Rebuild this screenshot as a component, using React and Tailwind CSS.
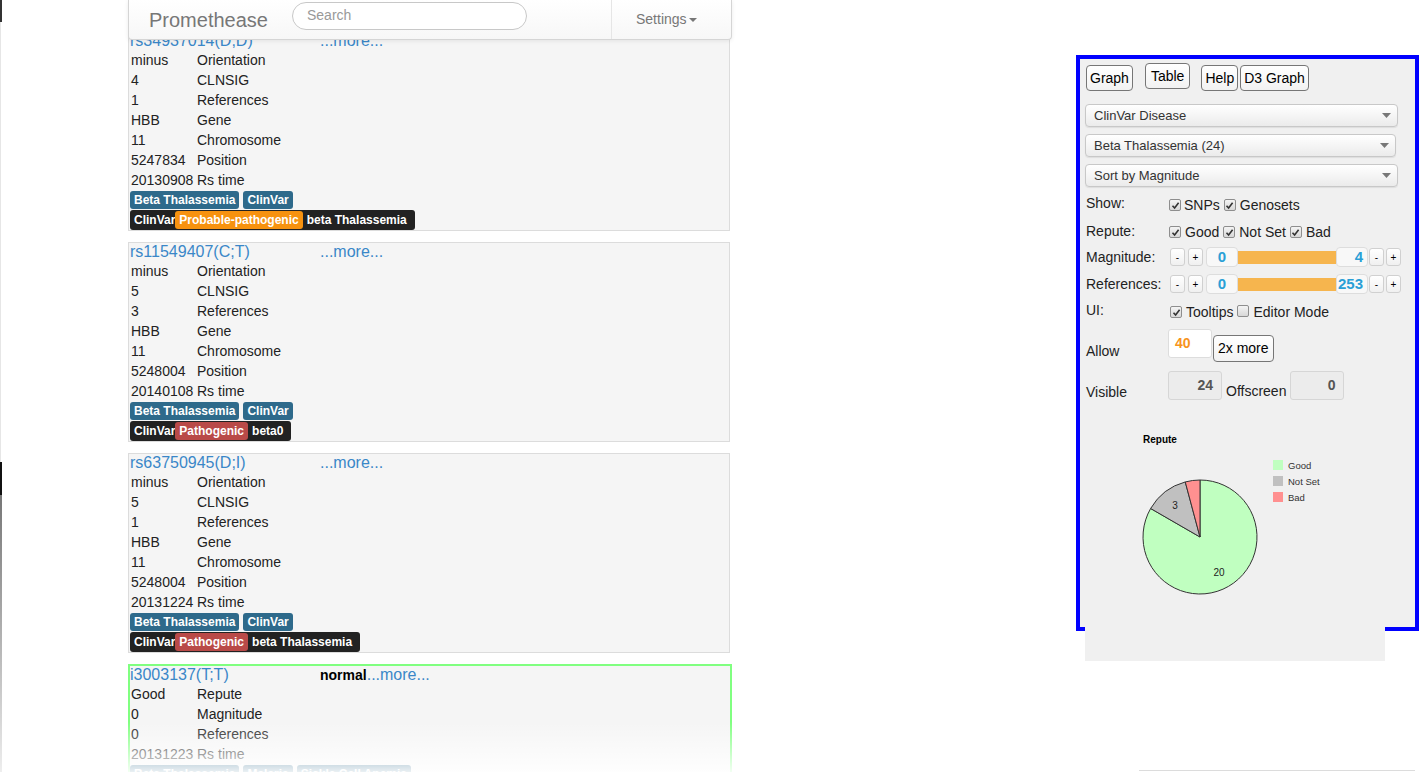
import React from 'react';

const snps = [
  {
    title: 'rs34937014(D;D)',
    rows: [['minus', 'Orientation'], ['4', 'CLNSIG'], ['1', 'References'], ['HBB', 'Gene'], ['11', 'Chromosome'], ['5247834', 'Position'], ['20130908', 'Rs time']],
    tags: ['Beta Thalassemia', 'ClinVar'],
    clin: { label: 'Probable-pathogenic', tone: 'orange', text: 'beta Thalassemia' },
  },
  {
    title: 'rs11549407(C;T)',
    rows: [['minus', 'Orientation'], ['5', 'CLNSIG'], ['3', 'References'], ['HBB', 'Gene'], ['11', 'Chromosome'], ['5248004', 'Position'], ['20140108', 'Rs time']],
    tags: ['Beta Thalassemia', 'ClinVar'],
    clin: { label: 'Pathogenic', tone: 'red', text: 'beta0' },
  },
  {
    title: 'rs63750945(D;I)',
    rows: [['minus', 'Orientation'], ['5', 'CLNSIG'], ['1', 'References'], ['HBB', 'Gene'], ['11', 'Chromosome'], ['5248004', 'Position'], ['20131224', 'Rs time']],
    tags: ['Beta Thalassemia', 'ClinVar'],
    clin: { label: 'Pathogenic', tone: 'red', text: 'beta Thalassemia' },
  },
];

const Tag = ({ children }) => (
  <span className="h-[18px] px-[4px] rounded-[3px] bg-[#2e6a8b] text-white text-[12px] font-bold leading-[18px]">{children}</span>
);

const SnpCard = ({ snp }) => (
  <div className="border border-[#dcdcdc] bg-[#f5f5f5] pl-px">
    <div className="flex h-[18px] items-center text-[16px] leading-[18px] text-[#3a87c8]">
      <span className="w-[190px]">{snp.title}</span>
      <span>...more...</span>
    </div>
    {snp.rows.map(([v, k]) => (
      <div key={k} className="flex h-[20px] items-center text-[14px] text-[#222] pl-px">
        <span className="w-[66px]">{v}</span>
        <span>{k}</span>
      </div>
    ))}
    <div className="flex gap-[4px] h-[18px] mt-px">
      {snp.tags.map((t) => <Tag key={t}>{t}</Tag>)}
    </div>
    <div className="flex mt-px">
      <div className="flex items-center h-[20px] rounded-[3px] bg-[#222] text-white text-[12px] font-bold pl-[4px] pr-[8px]">
        <span>ClinVar</span>
        <span className={`h-[18px] leading-[18px] px-[4px] rounded-[3px] ${snp.clin.tone === 'orange' ? 'bg-[#f7920f]' : 'bg-[#b94a48]'}`}>{snp.clin.label}</span>
        <span className="pl-[4px]">{snp.clin.text}</span>
      </div>
    </div>
  </div>
);

const Check = ({ on = true }) => (
  <span className="inline-flex w-[12px] h-[12px] rounded-[2px] border border-[#8e8e8e] bg-gradient-to-b from-[#f4f4f4] to-[#d8d8d8] items-center justify-center">
    {on && (
      <svg width="9" height="9" viewBox="0 0 9 9">
        <path d="M1.5 4.8 L3.6 7 L7.6 1.8" fill="none" stroke="#333" strokeWidth="1.6" />
      </svg>
    )}
  </span>
);

const Mini = ({ children }) => (
  <span className="w-[15px] h-[18px] rounded-[3px] border border-[#d0d0d0] bg-gradient-to-b from-white to-[#f0f0f0] text-[10px] text-black flex items-center justify-center">{children}</span>
);

const RangeRow = ({ label, max, top }) => (
  <div className={`flex items-center h-[20px] ${top}`}>
    <span className="w-[84px] text-[14px] text-[#222]">{label}</span>
    <div className="flex items-center gap-[3px]">
      <Mini>-</Mini>
      <Mini>+</Mini>
    </div>
    <div className="flex items-center ml-[3px]">
      <span className="w-[32px] h-[20px] rounded-[4px] border border-[#ddd] bg-[#f8f8f8] text-[15px] font-bold text-[#2a9fd6] flex items-center justify-center">0</span>
      <span className="w-[98px] h-[13px] bg-[#f6b54e]"></span>
      <span className="w-[32px] h-[20px] rounded-[4px] border border-[#ddd] bg-[#f8f8f8] text-[15px] font-bold text-[#2a9fd6] flex items-center justify-end pr-[4px]">{max}</span>
    </div>
    <div className="flex items-center gap-[2px] ml-px">
      <Mini>-</Mini>
      <Mini>+</Mini>
    </div>
  </div>
);

const Select = ({ children, w }) => (
  <div className={`${w} h-[23px] rounded-[4px] border border-[#c8c8c8] bg-gradient-to-b from-white to-[#ebebeb] shadow-[0_1px_1px_rgba(0,0,0,0.08)] flex items-center justify-between pl-[8px] pr-[6px] text-[13px] text-[#333]`}>
    <span>{children}</span>
    <svg width="9" height="5" viewBox="0 0 9 5"><path d="M0 0 H9 L4.5 5 Z" fill="#777" /></svg>
  </div>
);

const Btn = ({ children, cls = '' }) => (
  <span className={`h-[26px] rounded-[4px] border border-[#767676] bg-gradient-to-b from-white to-[#f2f2f2] text-[14px] text-black flex items-center ${cls}`}>{children}</span>
);

const PieChart = () => (
  <svg width="300" height="250" viewBox="0 0 300 250" style={{ fontFamily: '"Liberation Sans", Arial, sans-serif' }}>
    <text x="58" y="32" fontSize="10" fontWeight="bold" fill="#000">Repute</text>
    <path d="M115 126 L115 69 A57 57 0 1 1 65.64 97.5 Z" fill="#c0ffc0" stroke="#333" strokeWidth="1" />
    <path d="M115 126 L65.64 97.5 A57 57 0 0 1 100.25 70.94 Z" fill="#c0c0c0" stroke="#333" strokeWidth="1" />
    <path d="M115 126 L100.25 70.94 A57 57 0 0 1 115 69 Z" fill="#ff9090" stroke="#333" strokeWidth="1" />
    <text x="90" y="98" fontSize="10" textAnchor="middle" fill="#222">3</text>
    <text x="134" y="165" fontSize="10" textAnchor="middle" fill="#222">20</text>
    <rect x="188" y="49" width="10" height="10" fill="#c0ffc0" />
    <text x="203" y="58" fontSize="9.5" fill="#333">Good</text>
    <rect x="188" y="65" width="10" height="10" fill="#c0c0c0" />
    <text x="203" y="74" fontSize="9.5" fill="#333">Not Set</text>
    <rect x="188" y="81" width="10" height="10" fill="#ff9090" />
    <text x="203" y="90" fontSize="9.5" fill="#333">Bad</text>
  </svg>
);

export default function App() {
  return (
    <div className="relative h-[772px] overflow-hidden bg-white" style={{ fontFamily: '"Liberation Sans", Arial, Helvetica, sans-serif' }}>
      {/* leftover scrollbar edge */}
      <div className="absolute left-0 top-0 w-[2px] h-full flex flex-col">
        <div className="h-[22px] bg-[#333]"></div>
        <div className="h-[440px] w-px bg-[#e6e6e6]"></div>
        <div className="h-[33px] bg-[#111]"></div>
        <div className="flex-1 bg-gradient-to-b from-[#777] to-[#eee]"></div>
      </div>

      <div className="flex items-start">
        {/* result column */}
        <div className="relative ml-[128px] w-[604px] h-[772px]">
          <div className="absolute top-0 left-0 right-0 z-10 h-[40px] flex items-center rounded-b-[4px] border border-t-0 border-[#d5d5d5] bg-gradient-to-b from-white to-[#f7f7f7] shadow-[0_1px_4px_rgba(0,0,0,0.08)]">
            <span className="pl-[20px] w-[163px] text-[20px] text-[#777]">Promethease</span>
            <div className="w-[235px] h-[28px] -mt-[8px] rounded-full border border-[#c8c8c8] bg-white pl-[14px] flex items-center text-[14px] text-[#999]">Search</div>
            <div className="ml-auto h-full w-[120px] border-l border-[#e6e6e6] flex items-center pl-[24px] text-[14px] text-[#777]">
              Settings
              <svg className="ml-[2px]" width="8" height="4" viewBox="0 0 8 4"><path d="M0 0 H8 L4 4 Z" fill="#777" /></svg>
            </div>
          </div>

          <div className="pt-[31px] flex flex-col gap-[11px] w-[602px]">
            {snps.map((s) => <SnpCard key={s.title} snp={s} />)}
          </div>

          <div className="mt-[11px] border-2 border-[#80ff80] bg-[#f5f5f5] w-[604px] h-[140px]">
            <div className="flex h-[18px] items-center text-[16px] text-[#3a87c8]">
              <span className="w-[190px]">i3003137(T;T)</span>
              <span className="font-bold text-[14px] text-black">normal</span>
              <span>...more...</span>
            </div>
            {[['Good', 'Repute'], ['0', 'Magnitude'], ['0', 'References'], ['20131223', 'Rs time']].map(([v, k]) => (
              <div key={k} className="flex h-[20px] items-center text-[14px] text-[#222] pl-px">
                <span className="w-[66px]">{v}</span>
                <span>{k}</span>
              </div>
            ))}
            <div className="flex gap-[4px] h-[18px] mt-px">
              <Tag>Beta Thalassemia</Tag>
              <Tag>Malaria</Tag>
              <Tag>Sickle Cell Anemia</Tag>
            </div>
          </div>

          <div className="absolute left-0 right-0 bottom-0 h-[50px] z-10 bg-gradient-to-b from-white/0 to-white/90 pointer-events-none"></div>
        </div>

        {/* control panel */}
        <div className="ml-[344px] mt-[55px] w-[343px] h-[576px] border-4 border-[#0000ff] bg-[#f0f0f0]">
          <div className="flex items-start pt-[6px] pl-[6px]">
            <Btn cls="px-[3px]">Graph</Btn>
            <Btn cls="ml-[12px] -mt-[2px] px-[5px]">Table</Btn>
            <Btn cls="ml-[11px] px-[3px]">Help</Btn>
            <Btn cls="ml-[2px] px-[3px]">D3 Graph</Btn>
          </div>
          <div className="pl-[5px] flex flex-col gap-[7px] mt-[13px]">
            <Select w="w-[313px]">ClinVar Disease</Select>
            <Select w="w-[311px]">Beta Thalassemia (24)</Select>
            <Select w="w-[313px]">Sort by Magnitude</Select>
          </div>
          <div className="pl-[6px] text-[14px] text-[#222]">
            <div className="flex items-center h-[20px] mt-[8px]">
              <span className="w-[83px] -mt-[4px]">Show:</span>
              <Check /><span className="ml-[3px]">SNPs</span>
              <span className="ml-[4px]"><Check /></span><span className="ml-[4px]">Genosets</span>
            </div>
            <div className="flex items-center h-[20px] mt-[7px]">
              <span className="w-[83px] -mt-[2px]">Repute:</span>
              <Check /><span className="ml-[4px]">Good</span>
              <span className="ml-[4px]"><Check /></span><span className="ml-[4px]">Not Set</span>
              <span className="ml-[4px]"><Check /></span><span className="ml-[4px]">Bad</span>
            </div>
          </div>
          <div className="pl-[6px]">
            <RangeRow label="Magnitude:" max="4" top="mt-[5px]" />
            <RangeRow label="References:" max="253" top="mt-[7px]" />
          </div>
          <div className="pl-[6px] text-[14px] text-[#222]">
            <div className="flex items-center h-[20px] mt-[8px]">
              <span className="w-[84px] -mt-[4px]">UI:</span>
              <Check /><span className="ml-[4px]">Tooltips</span>
              <span className="ml-[4px]"><Check on={false} /></span><span className="ml-[4px]">Editor Mode</span>
            </div>
            <div className="flex items-start mt-[7px]">
              <span className="w-[82px] mt-[12px]">Allow</span>
              <span className="w-[44px] h-[29px] border border-[#ddd] rounded-[3px] bg-white pl-[6px] flex items-center text-[14px] font-bold text-[#f7941d]">40</span>
              <span className="ml-px mt-[6px] h-[27px] px-[4px] rounded-[4px] border border-[#767676] bg-gradient-to-b from-white to-[#f2f2f2] flex items-center text-[14px] text-black">2x more</span>
            </div>
            <div className="flex items-start mt-[9px]">
              <span className="w-[82px] mt-[11px]">Visible</span>
              <span className="w-[54px] h-[29px] border border-[#d6d6d6] rounded-[3px] bg-[#ececec] pr-[8px] flex items-center justify-end text-[14px] font-bold text-[#555]">24</span>
              <span className="ml-[4px] mt-[10px]">Offscreen</span>
              <span className="ml-[4px] w-[54px] h-[29px] border border-[#d6d6d6] rounded-[3px] bg-[#ececec] pr-[8px] flex items-center justify-end text-[14px] font-bold text-[#555]">0</span>
            </div>
          </div>
          <div className="ml-[5px] mt-[8px] w-[300px] h-[250px] bg-[#f0f0f0] relative">
            <PieChart />
          </div>
        </div>
      </div>

      <div className="absolute top-[770px] left-[1139px] w-[276px] h-px bg-[#dcdcdc]"></div>
    </div>
  );
}
